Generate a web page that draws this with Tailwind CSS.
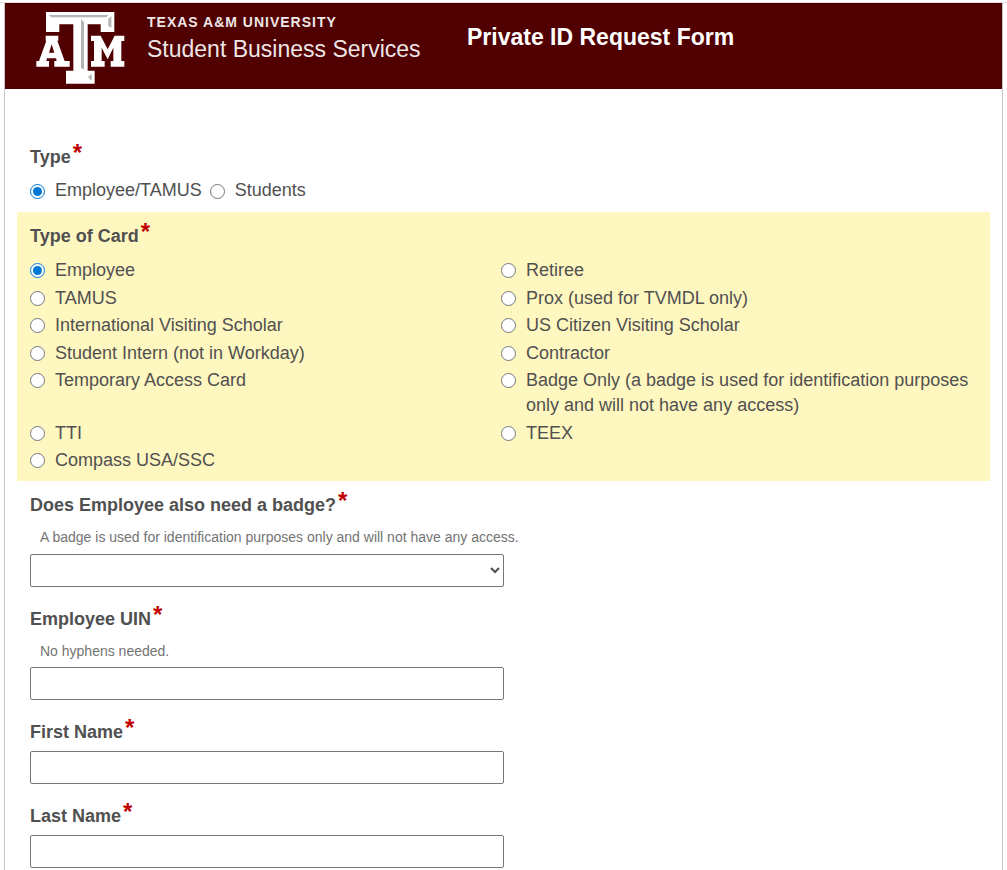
<!DOCTYPE html>
<html lang="en">
<head>
<meta charset="utf-8">
<meta name="viewport" content="width=device-width, initial-scale=1">
<title>Private ID Request Form</title>
<script src="https://cdn.jsdelivr.net/npm/@tailwindcss/browser@4"></script>
</head>
<body class="bg-white pt-[2px] font-['Liberation_Sans',Arial,sans-serif] text-lg text-[#505050]">
<div class="border-t border-[#dddddd]">
<div class="mx-1 min-h-[867px] border-x border-[#c8c8c8]">
  <header class="flex h-[86px] items-start bg-[#500000] text-white">
    <svg class="mt-2 ml-[30px] h-[74px] w-[92px] shrink-0" viewBox="105 33 276 222" role="img" aria-label="Texas A&amp;M University logo">
      <path fill="#fff" d="M138 36H343V96H302V73H263V212H284V251H198V212H220V73H178V96H138Z"/>
      <path fill="#b4b4b4" d="M147 45H325L319 52H154Z M334 48V84L325 77V57Z M243 57L252 66V209L243 203Z M264 231L275 221V242Z"/>
      <path fill="#fff" fill-rule="evenodd" d="M137 107H175V122H172L194 183H209V200H163V183H170L168 175H141L139 183H147V200H109V183H117L139 122H137Z M155 133L147 158H163Z"/>
      <path fill="#fff" d="M273 107H302L323 148L344 107H373V123H364V183H373V200H332V183H340V143L323 178L305 143V183H314V200H273V183H282V123H273Z"/>
    </svg>
    <div class="ml-[20px] w-[320px] pt-[11px]">
      <p class="text-sm leading-4 font-bold tracking-[1px] text-[#eee6e6]">TEXAS A&amp;M UNIVERSITY</p>
      <p class="mt-[5px] text-[23px] leading-7 text-[#eee6e6]">Student Business Services</p>
    </div>
    <h1 class="pt-5 text-[23px] leading-7 font-bold">Private ID Request Form</h1>
  </header>

  <form class="px-3 pt-14">
    <fieldset class="px-[13px] pb-[10px]">
      <legend class="flex items-start gap-[2px] leading-6 font-bold">Type <span class="text-2xl leading-4 text-[#c00000]">*</span></legend>
      <div class="mt-[9px] flex gap-2 leading-6">
        <label class="flex items-center gap-[10px]"><input type="radio" name="type" checked class="mt-[2px] size-[15px] accent-[#0078d7]">Employee/TAMUS</label>
        <label class="flex items-center gap-[10px]"><input type="radio" name="type" class="mt-[2px] size-[15px] accent-[#0078d7]">Students</label>
      </div>
    </fieldset>

    <fieldset class="bg-[#fff7c0] px-[13px] pt-3 pb-2">
      <legend class="float-left flex items-start gap-[2px] leading-6 font-bold">Type of Card <span class="text-2xl leading-4 text-[#c00000]">*</span></legend>
      <div class="clear-both grid min-h-[225px] grid-cols-2 content-between pt-[10px] pr-[5px] leading-[25px]">
        <label class="flex items-start gap-[10px]"><input type="radio" name="card" checked class="mt-[5px] size-[15px] shrink-0 accent-[#0078d7]">Employee</label>
        <label class="flex items-start gap-[10px]"><input type="radio" name="card" class="mt-[5px] size-[15px] shrink-0 accent-[#0078d7]">Retiree</label>
        <label class="flex items-start gap-[10px]"><input type="radio" name="card" class="mt-[5px] size-[15px] shrink-0 accent-[#0078d7]">TAMUS</label>
        <label class="flex items-start gap-[10px]"><input type="radio" name="card" class="mt-[5px] size-[15px] shrink-0 accent-[#0078d7]">Prox (used for TVMDL only)</label>
        <label class="flex items-start gap-[10px]"><input type="radio" name="card" class="mt-[5px] size-[15px] shrink-0 accent-[#0078d7]">International Visiting Scholar</label>
        <label class="flex items-start gap-[10px]"><input type="radio" name="card" class="mt-[5px] size-[15px] shrink-0 accent-[#0078d7]">US Citizen Visiting Scholar</label>
        <label class="flex items-start gap-[10px]"><input type="radio" name="card" class="mt-[5px] size-[15px] shrink-0 accent-[#0078d7]">Student Intern (not in Workday)</label>
        <label class="flex items-start gap-[10px]"><input type="radio" name="card" class="mt-[5px] size-[15px] shrink-0 accent-[#0078d7]">Contractor</label>
        <label class="flex items-start gap-[10px]"><input type="radio" name="card" class="mt-[5px] size-[15px] shrink-0 accent-[#0078d7]">Temporary Access Card</label>
        <label class="flex items-start gap-[10px]"><input type="radio" name="card" class="mt-[5px] size-[15px] shrink-0 accent-[#0078d7]">Badge Only (a badge is used for identification purposes only and will not have any access)</label>
        <label class="flex items-start gap-[10px]"><input type="radio" name="card" class="mt-[5px] size-[15px] shrink-0 accent-[#0078d7]">TTI</label>
        <label class="flex items-start gap-[10px]"><input type="radio" name="card" class="mt-[5px] size-[15px] shrink-0 accent-[#0078d7]">TEEX</label>
        <label class="flex items-start gap-[10px]"><input type="radio" name="card" class="mt-[5px] size-[15px] shrink-0 accent-[#0078d7]">Compass USA/SSC</label>
      </div>
    </fieldset>

    <div class="flex flex-col gap-5 px-[13px] pt-3">
      <div>
        <label for="badge" class="flex items-start gap-[2px] leading-6 font-bold">Does Employee also need a badge? <span class="text-2xl leading-4 text-[#c00000]">*</span></label>
        <p id="badge-hint" class="mt-[11px] ml-[10px] text-sm leading-[18px] text-[#737373]">A badge is used for identification purposes only and will not have any access.</p>
        <select id="badge" aria-describedby="badge-hint" class="mt-2 block h-[33px] w-1/2 rounded-[2px] border border-[#767676] bg-white"><option></option></select>
      </div>
      <div>
        <label for="uin" class="flex items-start gap-[2px] leading-6 font-bold">Employee UIN <span class="text-2xl leading-4 text-[#c00000]">*</span></label>
        <p id="uin-hint" class="mt-[11px] ml-[10px] text-sm leading-[18px] text-[#737373]">No hyphens needed.</p>
        <input id="uin" type="text" aria-describedby="uin-hint" class="mt-[7px] block h-[33px] w-1/2 rounded-[2px] border border-[#767676] bg-white px-2">
      </div>
      <div>
        <label for="first" class="flex items-start gap-[2px] leading-6 font-bold">First Name <span class="text-2xl leading-4 text-[#c00000]">*</span></label>
        <input id="first" type="text" class="mt-[7px] block h-[33px] w-1/2 rounded-[2px] border border-[#767676] bg-white px-2">
      </div>
      <div>
        <label for="last" class="flex items-start gap-[2px] leading-6 font-bold">Last Name <span class="text-2xl leading-4 text-[#c00000]">*</span></label>
        <input id="last" type="text" class="mt-[7px] block h-[33px] w-1/2 rounded-[2px] border border-[#767676] bg-white px-2">
      </div>
    </div>
  </form>
</div>
</div>
</body>
</html>
